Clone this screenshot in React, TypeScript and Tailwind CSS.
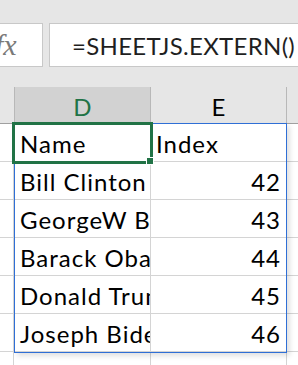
import React from 'react';

const rows = [
  { name: 'Bill Clinton', idx: 42 },
  { name: 'GeorgeW Bush', idx: 43 },
  { name: 'Barack Obama', idx: 44 },
  { name: 'Donald Trump', idx: 45 },
  { name: 'Joseph Biden', idx: 46 },
];

export default function App() {
  return (
    <div
      className="relative w-[298px] h-[365px] overflow-hidden bg-white"
      style={{ fontFamily: 'Lato, "Liberation Sans", sans-serif' }}
    >
      {/* formula bar */}
      <div className="h-[87px] bg-[#e6e6e6] pt-[23px] flex">
        <div className="w-[43px] h-[44px] bg-white border border-l-0 border-[#c8c8c8] flex items-center overflow-hidden">
          <span
            className="-ml-[5px] text-[30px] italic text-[#7a7a7a] leading-none"
            style={{ fontFamily: '"Liberation Serif", serif' }}
          >
            fx
          </span>
        </div>
        <div className="ml-[6px] flex-1 h-[44px] bg-white border border-r-0 border-[#c8c8c8] flex items-center pl-[22px] pt-[2px]">
          <span className="text-[24px] tracking-[0.3px] text-[#1f1f1f] whitespace-nowrap leading-none">=SHEETJS.EXTERN()</span>
        </div>
      </div>

      {/* column headers */}
      <div className="h-[37px] bg-[#e6e6e6] border-b border-[#a0a0a0] flex">
        <div className="w-[14px]" />
        <div className="w-[137px] bg-[#d2d2d2] border-l border-r border-[#b8b8b8] flex items-center justify-center pt-[4px] text-[24px] text-[#217346]">
          D
        </div>
        <div className="w-[136px] border-r border-[#b8b8b8] flex items-center justify-center pt-[4px] text-[24px] text-black">
          E
        </div>
        <div className="flex-1" />
      </div>

      {/* grid */}
      <div className="flex flex-col">
        {[{ name: 'Name', idx: 'Index' as string | number }, ...rows, { name: '', idx: '' }, { name: '', idx: '' }].map((r, i) => (
          <div key={i} className="h-[38px] flex border-b border-[#d4d4d4] text-[24px] tracking-[1px] text-black">
            <div className="w-[14px] border-r border-[#d4d4d4]" />
            <div className="w-[137px] border-r border-[#d4d4d4] pl-[6px] pt-[3px] flex items-center overflow-hidden whitespace-nowrap">
              {r.name}
            </div>
            <div
              className={`w-[136px] border-r border-[#d4d4d4] pt-[3px] flex items-center whitespace-nowrap ${
                i === 0 ? 'pl-[5px]' : 'justify-end pr-[5px]'
              }`}
            >
              {r.idx}
            </div>
            <div className="flex-1" />
          </div>
        ))}
      </div>

      {/* spill range */}
      <div className="absolute left-[14px] top-[123px] w-[273px] h-[230px] border border-[#2f6fd6] shadow-[3px_3px_5px_rgba(0,0,0,0.12)] pointer-events-none" />

      {/* active cell */}
      <div className="absolute left-[12px] top-[122px] w-[141px] h-[42px] border-[3px] border-[#217346] pointer-events-none" />
      <div className="absolute left-[146px] top-[157px] w-[8px] h-[8px] bg-[#217346] border border-white pointer-events-none" />
    </div>
  );
}
